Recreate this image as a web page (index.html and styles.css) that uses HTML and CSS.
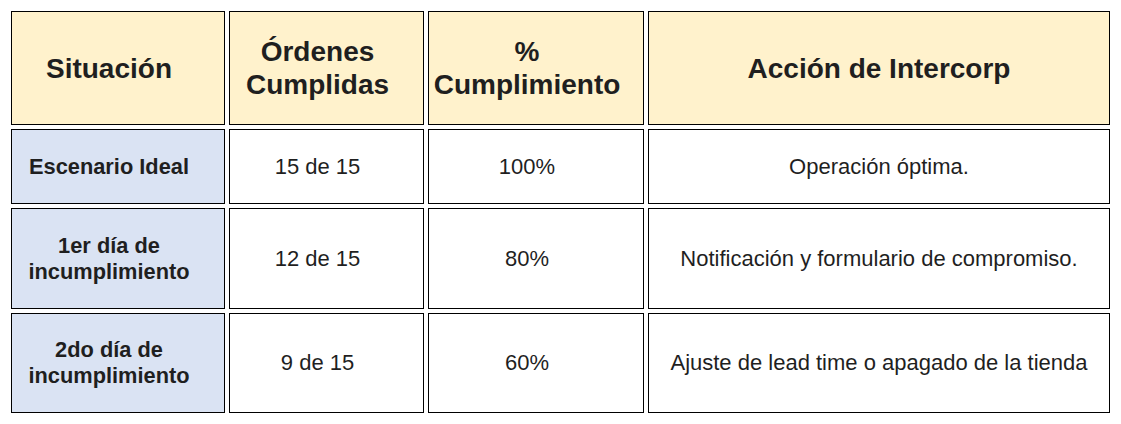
FILE: index.html
```html
<!DOCTYPE html>
<html lang="es">
<head>
<meta charset="utf-8">
<title>Cumplimiento</title>
<link rel="stylesheet" href="styles.css">
</head>
<body>
<div class="table">
  <div class="cell head shift">Situación</div>
  <div class="cell head shift">Órdenes<br>Cumplidas</div>
  <div class="cell head shift">%<br>Cumplimiento</div>
  <div class="cell head">Acción de Intercorp</div>

  <div class="cell label shift">Escenario Ideal</div>
  <div class="cell shift">15 de 15</div>
  <div class="cell shift">100%</div>
  <div class="cell">Operación óptima.</div>

  <div class="cell label shift">1er día de<br>incumplimiento</div>
  <div class="cell shift">12 de 15</div>
  <div class="cell shift">80%</div>
  <div class="cell">Notificación y formulario de compromiso.</div>

  <div class="cell label shift">2do día de<br>incumplimiento</div>
  <div class="cell shift">9 de 15</div>
  <div class="cell shift">60%</div>
  <div class="cell">Ajuste de lead time o apagado de la tienda</div>
</div>
</body>
</html>
```

FILE: styles.css
```css
html, body {
  margin: 0;
  padding: 0;
  background: #ffffff;
}

body {
  font-family: "Liberation Sans", Arial, sans-serif;
  color: #1f1f1f;
}

.table {
  display: grid;
  grid-template-columns: 214px 195px 216px 462px;
  grid-template-rows: 114px 75px 101px 100px;
  gap: 4px;
  padding: 11px;
}

.cell {
  box-sizing: border-box;
  border: 1px solid #000000;
  display: flex;
  align-items: center;
  justify-content: center;
  text-align: center;
  font-size: 22px;
  line-height: 26px;
  background: #ffffff;
}

.shift {
  padding-right: 18px;
}

.head {
  background: #fff2cc;
  font-weight: bold;
  font-size: 28px;
  line-height: 33px;
}

.label {
  background: #dae3f3;
  font-weight: bold;
  font-size: 21.8px;
}
```
